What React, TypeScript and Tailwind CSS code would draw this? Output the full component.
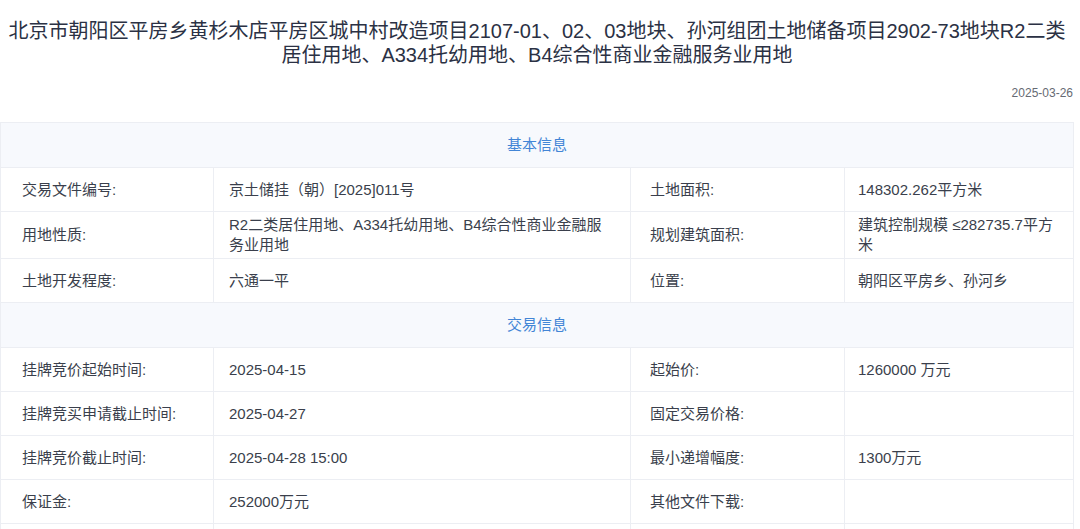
import React from 'react';

type Row = { label: string; value: string; label2: string; value2: string };

const basicRows: Row[] = [
  { label: '交易文件编号:', value: '京土储挂（朝）[2025]011号', label2: '土地面积:', value2: '148302.262平方米' },
  {
    label: '用地性质:',
    value: 'R2二类居住用地、A334托幼用地、B4综合性商业金融服务业用地',
    label2: '规划建筑面积:',
    value2: '建筑控制规模 ≤282735.7平方米',
  },
  { label: '土地开发程度:', value: '六通一平', label2: '位置:', value2: '朝阳区平房乡、孙河乡' },
];

const tradeRows: Row[] = [
  { label: '挂牌竞价起始时间:', value: '2025-04-15', label2: '起始价:', value2: '1260000 万元' },
  { label: '挂牌竞买申请截止时间:', value: '2025-04-27', label2: '固定交易价格:', value2: '' },
  { label: '挂牌竞价截止时间:', value: '2025-04-28 15:00', label2: '最小递增幅度:', value2: '1300万元' },
  { label: '保证金:', value: '252000万元', label2: '其他文件下载:', value2: '' },
  { label: '', value: '', label2: '', value2: '' },
];

const SectionHeader = ({ title }: { title: string }) => (
  <tr>
    <td colSpan={4} className="h-[45px] border border-[#eceef3] bg-[#f7f9fd] text-center text-[15px] text-[#4285d6]">
      {title}
    </td>
  </tr>
);

const DataRow = ({ row }: { row: Row }) => (
  <tr>
    <td className="h-[44px] border border-[#eceef3] pl-[21px] pr-3 py-[3px] align-middle">{row.label}</td>
    <td className="border border-[#eceef3] pl-[15px] pr-[24px] py-[3px] align-middle">{row.value}</td>
    <td className="border border-[#eceef3] pl-[19px] pr-3 py-[3px] align-middle">{row.label2}</td>
    <td className="border border-[#eceef3] pl-[13px] pr-[12px] py-[3px] align-middle">{row.value2}</td>
  </tr>
);

export default function App() {
  return (
    <div className="w-[1080px] h-[529px] overflow-hidden bg-white font-['Liberation_Sans','Noto_Sans_CJK_SC',sans-serif] text-[#3a3f4c]">
      <div className="w-[1074px]">
        <h1 className="pt-[19px] text-center text-[20px] leading-[24px] font-normal text-[#2b3144]">
          北京市朝阳区平房乡黄杉木店平房区城中村改造项目2107-01、02、03地块、孙河组团土地储备项目2902-73地块R2二类居住用地、A334托幼用地、B4综合性商业金融服务业用地
        </h1>
        <div className="mt-[18px] pr-[1px] text-right text-[12px] leading-[16px] text-[#666a73]">2025-03-26</div>
        <table className="mt-[21px] w-[1073px] table-fixed border-collapse text-[15px] leading-[20px]">
          <colgroup>
            <col className="w-[213px]" />
            <col className="w-[417px]" />
            <col className="w-[214px]" />
            <col className="w-[229px]" />
          </colgroup>
          <tbody>
            <SectionHeader title="基本信息" />
            {basicRows.map((r, i) => (
              <DataRow key={'b' + i} row={r} />
            ))}
            <SectionHeader title="交易信息" />
            {tradeRows.map((r, i) => (
              <DataRow key={'t' + i} row={r} />
            ))}
          </tbody>
        </table>
      </div>
    </div>
  );
}
